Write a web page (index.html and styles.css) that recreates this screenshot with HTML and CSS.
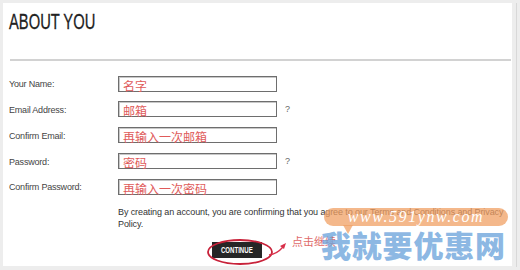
FILE: index.html
```html
<!DOCTYPE html>
<html>
<head>
<meta charset="utf-8">
<link rel="stylesheet" href="styles.css">
</head>
<body>
<div class="page">
  <div class="panel">
    <div class="header">
      <h1 class="title">ABOUT YOU</h1>
    </div>
    <div class="form">
      <div class="row"><span class="label">Your Name:</span><span class="input">名字</span></div>
      <div class="row"><span class="label">Email Address:</span><span class="input">邮箱</span><span class="help">?</span></div>
      <div class="row"><span class="label">Confirm Email:</span><span class="input">再输入一次邮箱</span></div>
      <div class="row"><span class="label">Password:</span><span class="input">密码</span><span class="help">?</span></div>
      <div class="row"><span class="label">Confirm Password:</span><span class="input">再输入一次密码</span></div>
    </div>
    <p class="terms">By creating an account, you are confirming that you agree to our Terms and Conditions and Privacy Policy.</p>
    <div class="actions">
      <span class="btn"><span class="btn-text">CONTINUE</span></span>
      <span class="hint">点击继续</span>
    </div>
    <svg class="annot" width="120" height="40" viewBox="0 0 120 40">
      <ellipse cx="37" cy="14" rx="32" ry="12" fill="none" stroke="#c8223a" stroke-width="1.8"/>
      <path d="M66 17 Q74 16 80 9" fill="none" stroke="#d8304a" stroke-width="1.3"/>
      <path d="M77 8 L83 5 L81 11 Z" fill="#d8304a"/>
    </svg>
    <div class="watermark">
      <div class="bubble">www.591ynw.com</div>
      <div class="bubble-tail"></div>
      <div class="brand">我就要优惠网</div>
    </div>
  </div>
  <div class="edge"></div>
</div>
</body>
</html>
```

FILE: styles.css
```css
html, body {
  margin: 0;
  padding: 0;
}
body {
  width: 520px;
  height: 270px;
  background: #ededed;
  overflow: hidden;
  font-family: "Liberation Sans", Arial, sans-serif;
}
.page {
  display: flex;
  padding: 3px 0 0 3px;
  height: 267px;
  box-sizing: border-box;
}
.panel {
  position: relative;
  width: 509px;
  height: 263px;
  background: #fff;
}
.edge {
  width: 4px;
  border-right: 1px solid #d8d8d8;
}
.header {
  height: 56px;
  margin: 0 1px 0 7px;
  border-bottom: 2px solid #d2d2d2;
}
.title {
  margin: 0;
  padding: 6px 0 0 0;
  font-family: "Liberation Sans", sans-serif;
  font-weight: normal;
  font-size: 22px;
  line-height: 26px;
  color: #222;
  display: inline-block;
  transform: scaleX(0.67);
  transform-origin: left center;
  margin-left: -1px;
  -webkit-text-stroke: 0.3px #222;
}
.form {
  display: flex;
  flex-direction: column;
  gap: 9.8px;
  margin-top: 14.7px;
  padding-left: 6px;
}
.row {
  display: flex;
  align-items: center;
  height: 16px;
}
.label {
  width: 109px;
  font-size: 9px;
  letter-spacing: -0.2px;
  color: #444;
  padding-top: 1px;
}
.input {
  box-sizing: border-box;
  width: 159px;
  height: 16px;
  border: 1px solid #6e6e6e;
  box-shadow: inset 1px 1px 0 #c8c8c8;
  padding: 1px 0 0 4px;
  font-family: "Noto Sans CJK SC", sans-serif;
  font-size: 12px;
  line-height: 15px;
  color: #e05a5a;
  white-space: nowrap;
}
.help {
  margin-left: 8px;
  font-size: 9px;
  color: #666;
}
.terms {
  margin: 11px 0 0 115px;
  width: 392px;
  font-size: 9px;
  line-height: 12px;
  letter-spacing: -0.1px;
  color: #333;
}
.actions {
  display: flex;
  align-items: flex-start;
  margin: 12px 0 0 209px;
}
.btn {
  display: flex;
  align-items: center;
  justify-content: center;
  width: 50px;
  height: 16px;
  background: #262626;
}
.btn-text {
  display: inline-block;
  font-family: "Liberation Sans", sans-serif;
  font-weight: bold;
  font-size: 9.5px;
  color: #fff;
  transform: scaleX(0.64);
}
.hint {
  margin: -8px 0 0 30px;
  font-family: "Noto Sans CJK SC", sans-serif;
  font-size: 11px;
  line-height: 14px;
  color: #e06a6a;
}
.annot {
  position: absolute;
  left: 200px;
  top: 235px;
}
.watermark {
  position: absolute;
  left: 318px;
  top: 205px;
  width: 190px;
}
.bubble {
  width: 184px;
  height: 18px;
  border-radius: 9px;
  background: rgba(240, 160, 100, 0.75);
  color: #fff;
  font-family: "Liberation Serif", serif;
  font-style: italic;
  font-size: 16px;
  line-height: 18px;
  letter-spacing: 1.6px;
  text-align: center;
  margin-left: 3px;
}
.bubble-tail {
  position: absolute;
  left: 22px;
  top: 17px;
  width: 0;
  height: 0;
  border-left: 5px solid transparent;
  border-right: 5px solid transparent;
  border-top: 9px solid rgba(240, 160, 100, 0.75);
}
.brand {
  margin-top: 1px;
  font-family: "Noto Sans CJK SC", sans-serif;
  font-weight: 900;
  font-size: 30px;
  line-height: 34px;
  letter-spacing: 0.8px;
  color: rgba(110, 165, 220, 0.8);
  white-space: nowrap;
}
```
